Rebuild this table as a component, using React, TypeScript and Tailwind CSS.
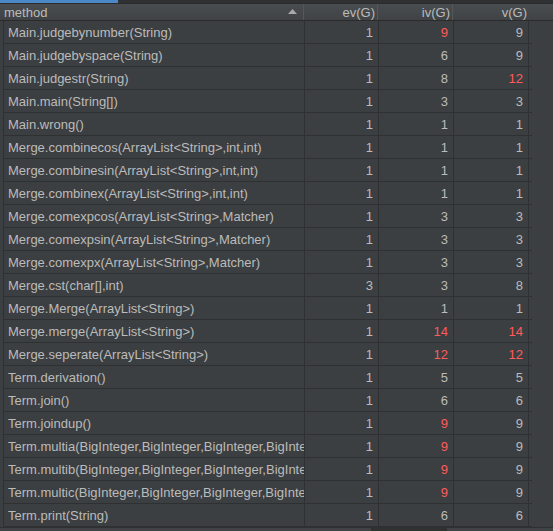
const rows: [string, number, number, number][] = [
  ['Main.judgebynumber(String)', 1, 9, 9],
  ['Main.judgebyspace(String)', 1, 6, 9],
  ['Main.judgestr(String)', 1, 8, 12],
  ['Main.main(String[])', 1, 3, 3],
  ['Main.wrong()', 1, 1, 1],
  ['Merge.combinecos(ArrayList<String>,int,int)', 1, 1, 1],
  ['Merge.combinesin(ArrayList<String>,int,int)', 1, 1, 1],
  ['Merge.combinex(ArrayList<String>,int,int)', 1, 1, 1],
  ['Merge.comexpcos(ArrayList<String>,Matcher)', 1, 3, 3],
  ['Merge.comexpsin(ArrayList<String>,Matcher)', 1, 3, 3],
  ['Merge.comexpx(ArrayList<String>,Matcher)', 1, 3, 3],
  ['Merge.cst(char[],int)', 3, 3, 8],
  ['Merge.Merge(ArrayList<String>)', 1, 1, 1],
  ['Merge.merge(ArrayList<String>)', 1, 14, 14],
  ['Merge.seperate(ArrayList<String>)', 1, 12, 12],
  ['Term.derivation()', 1, 5, 5],
  ['Term.join()', 1, 6, 6],
  ['Term.joindup()', 1, 9, 9],
  ['Term.multia(BigInteger,BigInteger,BigInteger,BigInteger)', 1, 9, 9],
  ['Term.multib(BigInteger,BigInteger,BigInteger,BigInteger)', 1, 9, 9],
  ['Term.multic(BigInteger,BigInteger,BigInteger,BigInteger)', 1, 9, 9],
  ['Term.print(String)', 1, 6, 6],
]

// thresholds the metrics plugin flags in red
const ivRed = (n: number) => n > 8
const vRed = (n: number) => n > 10

function NumCell({ value, red, width }: { value: number; red: boolean; width: string }) {
  return (
    <div className={`${width} flex shrink-0 items-center justify-end border-r border-[#2e3032] pr-[5px] ${red ? 'text-[#ff5b5b]' : 'text-[#bbbbbb]'}`}>
      {value}
    </div>
  )
}

export default function App() {
  return (
    <div className="flex h-[531px] w-[553px] flex-col overflow-hidden bg-[#3c3f41] text-[13px] leading-none text-[#bbbbbb] [font-family:'Liberation_Sans',Arial,sans-serif]">
      <div className="flex h-[4px] shrink-0 border-b border-[#2b2b2b] bg-[#2f3133]">
        <div className="h-[3px] w-[118px] bg-[#4a88c7]" />
      </div>

      <div className="flex h-[17px] shrink-0 border-b border-[#2b2b2b] bg-gradient-to-b from-[#4a4d4f] to-[#404345] pl-[3px]">
        <div className="relative flex w-[301px] shrink-0 items-center border-r border-[#55585a] pl-[1px]">
          method
          <svg className="absolute right-[6px] top-[5px]" width="9" height="5" viewBox="0 0 9 5">
            <path d="M0 5 L4.5 0 L9 5 Z" fill="#a7a9ab" />
          </svg>
        </div>
        <div className="flex w-[74px] shrink-0 items-center justify-end border-r border-[#55585a] pr-[2px]">ev(G)</div>
        <div className="flex w-[75px] shrink-0 items-center justify-end border-r border-[#55585a] pr-[2px]">iv(G)</div>
        <div className="flex w-[75px] shrink-0 items-center justify-end pr-[1px]">v(G)</div>
      </div>

      <div className="flex flex-col pl-[3px]">
        {rows.map(([name, ev, iv, v]) => (
          <div key={name} className="flex h-[23px] w-[529px] shrink-0 border-b border-l border-[#2e3032]">
            <div className="flex w-[301px] shrink-0 items-center overflow-hidden whitespace-nowrap border-r border-[#2e3032] pl-[4px]">
              {name}
            </div>
            <NumCell value={ev} red={false} width="w-[74px]" />
            <NumCell value={iv} red={ivRed(iv)} width="w-[75px]" />
            <NumCell value={v} red={vRed(v)} width="w-[75px]" />
          </div>
        ))}
      </div>

      <div className="relative flex-1 border-t border-[#2e3032] bg-[#404345]">
        <div className="absolute left-[371px] top-0 h-full w-[76px] bg-[#2f3133]" />
      </div>
    </div>
  )
}
